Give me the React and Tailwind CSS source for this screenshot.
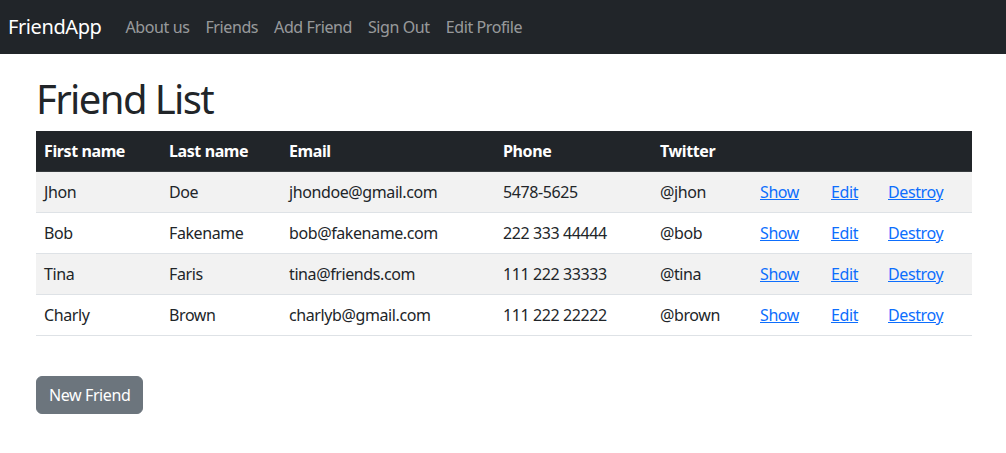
import React from "react";

const friends = [
  ["Jhon", "Doe", "jhondoe@gmail.com", "5478-5625", "@jhon"],
  ["Bob", "Fakename", "bob@fakename.com", "222 333 44444", "@bob"],
  ["Tina", "Faris", "tina@friends.com", "111 222 33333", "@tina"],
  ["Charly", "Brown", "charlyb@gmail.com", "111 222 22222", "@brown"],
];

export default function App() {
  return (
    <div className="min-h-[453px] bg-white text-[#212529] text-[16px] leading-6 tracking-[-0.025em]" style={{ fontFamily: '"Noto Sans", sans-serif' }}>
      <nav className="h-[54px] bg-[#212529] flex items-center px-2">
        <span className="text-[20px] text-white mr-4 leading-[30px]">FriendApp</span>
        <div className="flex">
          {["About us", "Friends", "Add Friend", "Sign Out", "Edit Profile"].map((l) => (
            <span key={l} className="px-2 text-[rgba(255,255,255,0.55)]">{l}</span>
          ))}
        </div>
      </nav>
      <div className="w-[960px] ml-[24px] px-3">
        <h1 className="mt-[21px] mb-2 text-[40px] leading-[48px] font-normal tracking-[-0.04em]">Friend List</h1>
        <table className="w-full table-fixed border-collapse">
          <colgroup>
            <col className="w-[125px]" />
            <col className="w-[120px]" />
            <col className="w-[214px]" />
            <col className="w-[157px]" />
            <col className="w-[100px]" />
            <col className="w-[71px]" />
            <col className="w-[57px]" />
            <col className="w-[92px]" />
          </colgroup>
          <thead>
            <tr className="bg-[#212529] text-white text-left">
              {["First name", "Last name", "Email", "Phone", "Twitter", "", "", ""].map((h, i) => (
                <th key={i} className="p-2 font-bold border-b border-[#373b3e] whitespace-nowrap">{h}</th>
              ))}
            </tr>
          </thead>
          <tbody>
            {friends.map((f, r) => (
              <tr key={r} className={r % 2 === 0 ? "bg-[#f2f2f2]" : "bg-white"}>
                {f.map((c, i) => (
                  <td key={i} className="p-2 border-b border-[#dee2e6] whitespace-nowrap">{c}</td>
                ))}
                {["Show", "Edit", "Destroy"].map((a) => (
                  <td key={a} className="p-2 border-b border-[#dee2e6] whitespace-nowrap">
                    <a href="#" className="text-[#0d6efd] underline">{a}</a>
                  </td>
                ))}
              </tr>
            ))}
          </tbody>
        </table>
        <button className="mt-10 bg-[#6c757d] border border-[#6c757d] text-white rounded-[6px] px-3 py-[6px] leading-6">New Friend</button>
      </div>
    </div>
  );
}
